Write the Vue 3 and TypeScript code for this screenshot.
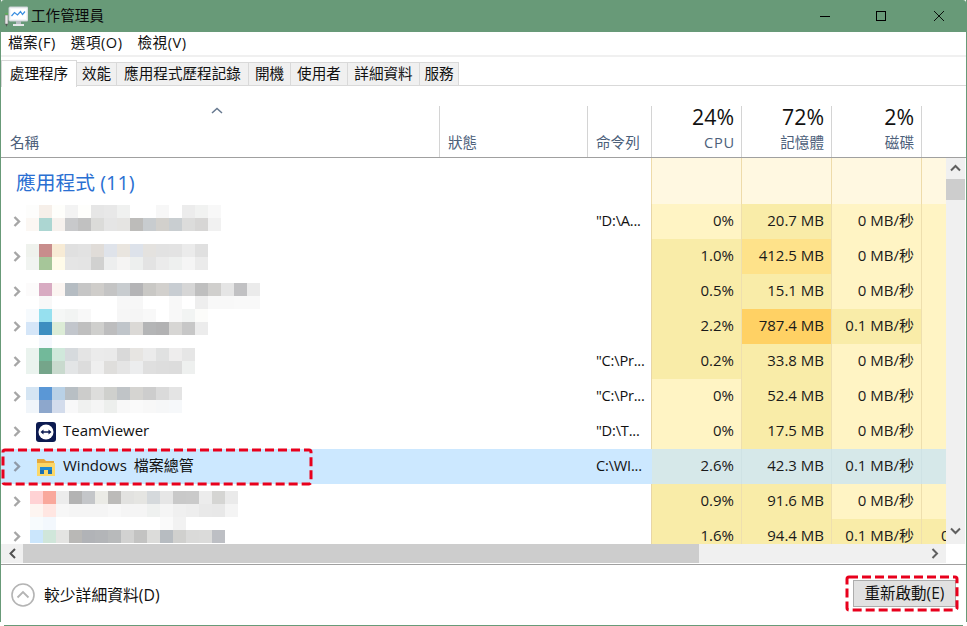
<script setup lang="ts">
type Blob = { top: number; left: number; cols: number; rows: string[][] }
type Row = {
  name?: string
  icon?: 'teamviewer' | 'folder'
  blob?: Blob
  cmd: string
  cpu: string
  mem: string
  disk: string
  extra?: string
  heat: [string, string, string, string]
  selected?: boolean
}

const menus = ['檔案(F)', '選項(O)', '檢視(V)']
const tabs = ['處理程序', '效能', '應用程式歷程記錄', '開機', '使用者', '詳細資料', '服務']

function parseBlob(top: number, left: number, lines: string[]): Blob {
  const rows = lines.map(l => l.split(' '))
  return { top, left, cols: rows[0].length, rows }
}

const rows: Row[] = [
  {
    blob: parseBlob(1, 0, [
      'fdfdfc f6efe9 fefefb f3f3f3 fefefc e6e6e6 e8e8e8 f0f1f0 ffffff ffffff f7f7f7 ffffff ececec f1f2f1 f8f8f8',
      'fbf7f3 acd6d2 f6f1ed c8c9cb c1c1c1 dbdbd9 e5e5e5 e5e4e2 bdbcba c8cccf d2d0cc c9ced1 dcdcdb d7d6d5 f1f1f1'
    ]),
    cmd: '"D:\\A...', cpu: '0%', mem: '20.7 MB', disk: '0 MB/秒',
    heat: ['h1', 'h2', 'h1', 'h1']
  },
  {
    blob: parseBlob(5, 0, [
      'eff2ed c88d8c f7ebd5 e0e0e0 e2e2e2 e0dcd8 dfe3ea e9e5df dde2ea e4e2df e2e2e2 e3e3e3 ebebeb e0e0e0',
      'f1f4f1 a6c699 fffbe9 e5e5e5 e4e4e4 d1d1d0 edeeee f5f4f3 edefee e3e3e3 ebebeb eef0ef f5f5f5 ebebeb'
    ]),
    cmd: '', cpu: '1.0%', mem: '412.5 MB', disk: '0 MB/秒',
    heat: ['h2', 'h3', 'h1', 'h1']
  },
  {
    blob: parseBlob(9, 0, [
      'fcfbfb d8abc2 fbf5f1 b5bcc2 c6c6c6 cfcdca c4c4c4 c8cccf b4b4b6 c9c8c5 d2d0cd c8cdd2 d6d6d6 bfbfbf d0cfcd e5e5e5 c1c1c3 ebebeb',
      'ffffff f8f8f8 ffffff ffffff ffffff ffffff ffffff f7f7f7 f7f7f7 ffffff ffffff f8f8f8 ffffff eeeeee f8f8f8 f8f8f8 f9f9f9 f9f9f9'
    ]),
    cmd: '', cpu: '0.5%', mem: '15.1 MB', disk: '0 MB/秒',
    heat: ['h2', 'h2', 'h1', 'h1']
  },
  {
    blob: parseBlob(0, 0, [
      'f6fafd 96e0ef f5f7f6 f2f4f3 f8f8f8 ffffff ffffff f6f6f6 f5f5f5 f8f8f8 ffffff f8f8f8 f2f4f3 fcfcfa',
      'd5e6f8 3d8ec0 dcecd6 c2c6cc bfbfbf cfcfcd bdbdbe c0c5ca dbd9d6 b4b5b6 b2b2b3 d7d6d4 c7c7c7 ececec',
      'ffffff f5f8fd ffffff ffffff ffffff ffffff ffffff ffffff ffffff ffffff ffffff ffffff ffffff ffffff'
    ]),
    cmd: '', cpu: '2.2%', mem: '787.4 MB', disk: '0.1 MB/秒',
    heat: ['h2', 'h4', 'h2', 'h1']
  },
  {
    blob: parseBlob(4, 0, [
      'eaf3ee 72b99a d0e8db d6dadd e4e4e4 ebebeb eaeaea d9d9d9 e7e5e2 ebebeb e0e1e1 eeeded e6e6e6',
      'eaf3ee 75a58a c9dace e3e5e6 dcdcdc efefef dfdedc e5e5e5 ecedee dfdfdf dddddd dcdcdc eef0ef'
    ]),
    cmd: '"C:\\Pr...', cpu: '0.2%', mem: '33.8 MB', disk: '0 MB/秒',
    heat: ['h2', 'h2', 'h1', 'h1']
  },
  {
    blob: parseBlob(8, 0, [
      'd5e5f3 5a97d6 b9d1e6 b8bfc4 cccccb dddddc cfd0cd c0c4c7 d5d4d1 cdcdcd dadada e4e4e4',
      'f0f5fa 8da7cc d3dcec f8f8f9 f0f1f0 f5f5f5 edefed f8f8f8 fafafa f8f8f8 f6f7f8 f6f8fa'
    ]),
    cmd: '"C:\\Pr...', cpu: '0%', mem: '52.4 MB', disk: '0 MB/秒',
    heat: ['h1', 'h2', 'h1', 'h1']
  },
  {
    name: 'TeamViewer', icon: 'teamviewer',
    cmd: '"D:\\T...', cpu: '0%', mem: '17.5 MB', disk: '0 MB/秒',
    heat: ['h1', 'h2', 'h1', 'h1']
  },
  {
    name: 'Windows 檔案總管', icon: 'folder', selected: true,
    cmd: 'C:\\WI...', cpu: '2.6%', mem: '42.3 MB', disk: '0.1 MB/秒',
    heat: ['sel', 'sel', 'sel', 'sel']
  },
  {
    blob: parseBlob(7, 4, [
      'ffd2d4 f9a89c ececec b3b3b3 c4c6c9 ebebe6 bcbbb9 e2e2e0 e5e5e2 d5d9dc e6e6e6 c9c9c9 cacaca ececec d5d5d3 eaeaea',
      'fdf5f1 ffe6e2 f7f7f7 f5f5f5 f5f5f5 f5f5f5 f8f8f8 f5f5f5 f5f5f5 eff1f0 f5f5f5 f0f0f0 eeeeee e9e9e9 e8e8e8 f4f4f4',
      'f7fbfd f3f8fd ffffff ffffff ffffff ffffff ffffff ffffff ffffff ffffff fafafa f2f2f2 ffffff ffffff ffffff ffffff'
    ]),
    cmd: '', cpu: '0.9%', mem: '91.6 MB', disk: '0 MB/秒',
    heat: ['h2', 'h2', 'h1', 'h1']
  },
  {
    blob: parseBlob(11, 4, [
      'cbe6fc d0e6da e4e4e2 b9b8b6 b1b3b7 b3b5b8 b8babb d2d2d1 c3c3c2 dcdcda b7bcc1 d0d0ce dadad9 dbdbda bdbfc4'
    ]),
    cmd: '', cpu: '1.6%', mem: '94.4 MB', disk: '0.1 MB/秒', extra: '0',
    heat: ['h2', 'h2', 'h2', 'h2']
  }
]
</script>

<template>
  <div class="window">
    <div class="frame">
      <header class="titlebar">
        <svg class="app-icon" width="24" height="22" viewBox="0 0 24 22">
          <rect x="1" y="8" width="3" height="2" fill="#5fae5a" />
          <rect x="1" y="10" width="3" height="9" fill="#e8e8e8" stroke="#777" stroke-width=".6" />
          <path d="M1.500 19h2l-1 3z" fill="#555" />
          <rect x="5" y="2" width="19" height="14" rx="1" fill="#f4f6f8" stroke="#c8ced2" />
          <rect x="7" y="4" width="15" height="10" fill="#fff" />
          <path d="M7.500 11l3-3.500 3 2.500 3-3.500 2 3 2.500-3" fill="none" stroke="#3b8fe0" stroke-width="1.200" />
          <rect x="12" y="16" width="5" height="3" fill="#b8bec2" />
          <rect x="9" y="19" width="11" height="2" fill="#e6e8ea" />
        </svg>
        <span class="title">工作管理員</span>
        <div class="controls">
          <svg width="10" height="10" viewBox="0 0 10 10"><path d="M0 5.500h10" stroke="#000" fill="none" /></svg>
          <svg width="10" height="10" viewBox="0 0 10 10"><rect x=".5" y=".5" width="9" height="9" stroke="#000" fill="none" /></svg>
          <svg class="close" width="10" height="10" viewBox="0 0 10 10"><path d="M0 0l10 10M10 0L0 10" stroke="#000" stroke-width=".9" fill="none" /></svg>
        </div>
      </header>

      <nav class="menu">
        <span v-for="m in menus" :key="m">{{ m }}</span>
      </nav>

      <div class="tabs">
        <span
          v-for="(t, i) in tabs"
          :key="t"
          class="tab"
          :class="{ active: i === 0 }"
        >{{ t }}</span>
        <span class="tab-rest"></span>
      </div>

      <section class="head grid">
        <div class="hcell name-head">
          <svg class="sort" width="12" height="7" viewBox="0 0 12 7"><path d="M1 6l5-4.500L11 6" fill="none" stroke="#66788f" stroke-width="1.500" /></svg>
          <span class="label">名稱</span>
        </div>
        <div class="hcell"><span class="label">狀態</span></div>
        <div class="hcell"><span class="label">命令列</span></div>
        <div class="hcell right"><span class="pct">24%</span><span class="label wide">CPU</span></div>
        <div class="hcell right"><span class="pct">72%</span><span class="label">記憶體</span></div>
        <div class="hcell right"><span class="pct">2%</span><span class="label">磁碟</span></div>
        <div class="hcell last"></div>
      </section>

      <div class="body">
        <div class="viewport">
          <div class="group grid">
            <div class="group-title">應用程式 (11)</div>
            <div class="gcell"></div>
            <div class="gcell"></div>
            <div class="gcell"></div>
            <div class="gcell end"></div>
          </div>

          <div
            v-for="(r, i) in rows"
            :key="i"
            class="row grid"
            :class="{ selected: r.selected }"
          >
            <div class="name">
              <svg class="chev" width="8" height="11" viewBox="0 0 8 11"><path d="M1.500 1l4.500 4.500L1.500 10" fill="none" :stroke="r.selected ? '#8f9aa8' : '#a6a6a6'" stroke-width="2.400" /></svg>
              <div
                v-if="r.blob"
                class="blob"
                :style="{
                  marginTop: r.blob.top + 'px',
                  marginLeft: r.blob.left + 'px',
                  gridTemplateColumns: `repeat(${r.blob.cols}, 13px)`
                }"
              >
                <template v-for="(line, y) in r.blob.rows" :key="y">
                  <i v-for="(c, x) in line" :key="x" :style="{ background: '#' + c }"></i>
                </template>
              </div>
              <template v-else>
                <svg v-if="r.icon === 'teamviewer'" class="icon" width="20" height="20" viewBox="0 0 20 20">
                  <rect width="20" height="20" rx="3" fill="#0c1a50" />
                  <circle cx="10" cy="10" r="7.500" fill="#fff" />
                  <path d="M4.500 10l3-2.500v1.700h5V7.500l3 2.500-3 2.500v-1.700h-5v1.700z" fill="#0c1a50" />
                </svg>
                <svg v-else class="icon" width="20" height="20" viewBox="0 0 20 20">
                  <path d="M1 2h7l2 2h8v3H1z" fill="#e6a83c" />
                  <path d="M1 6h18v13H1z" fill="#fbd768" />
                  <path d="M4 10h12v3H4z" fill="#1f8ad4" />
                  <path d="M4 13h4v4H4zM12 13h4v4h-4z" fill="#1b6fb0" />
                  <path d="M8 13h4v4H8z" fill="#fbd768" />
                </svg>
                <span class="text">{{ r.name }}</span>
              </template>
            </div>
            <div class="status"></div>
            <div class="cmd">{{ r.cmd }}</div>
            <div class="val" :class="r.heat[0]">{{ r.cpu }}</div>
            <div class="val" :class="r.heat[1]">{{ r.mem }}</div>
            <div class="val" :class="r.heat[2]">{{ r.disk }}</div>
            <div class="val extra" :class="r.heat[3]">{{ r.extra }}</div>
          </div>
        </div>

        <div class="vscroll">
          <svg width="19" height="21" viewBox="0 0 19 21"><path d="M5 12.500l4.500-4.500 4.500 4.500" fill="none" stroke="#606060" stroke-width="2" /></svg>
          <div class="vthumb"></div>
          <svg class="vdown" width="19" height="21" viewBox="0 0 19 21"><path d="M5 5.500l4.500 4.500 4.500-4.500" fill="none" stroke="#606060" stroke-width="2" /></svg>
        </div>
      </div>

      <div class="hscroll">
        <svg width="22" height="19" viewBox="0 0 22 19"><path d="M14 5l-4.500 4.500L14 14" fill="none" stroke="#505050" stroke-width="2" /></svg>
        <div class="hthumb"></div>
        <svg class="hright" width="22" height="19" viewBox="0 0 22 19"><path d="M8.500 5l4.500 4.500L8.500 14" fill="none" stroke="#606060" stroke-width="2" /></svg>
      </div>

      <footer class="footer">
        <svg width="24" height="24" viewBox="0 0 24 24">
          <circle cx="12" cy="12" r="11" fill="none" stroke="#b4b4b4" stroke-width="1.600" />
          <path d="M6.500 14.500L12 9l5.500 5.500" fill="none" stroke="#b4b4b4" stroke-width="1.800" />
        </svg>
        <span class="less">較少詳細資料(D)</span>
        <button class="restart" type="button">重新啟動(E)</button>
      </footer>
    </div>
    <div class="bottom-line"></div>

    <svg class="dash row-dash" width="312" height="38" viewBox="0 0 312 38">
      <rect x="2" y="2" width="308" height="34" rx="2" fill="none" stroke="#e8001c" stroke-width="3" stroke-dasharray="9 4" />
    </svg>
    <svg class="dash btn-dash" width="114" height="37" viewBox="0 0 114 37">
      <rect x="2" y="2" width="110" height="33" rx="2" fill="none" stroke="#e8001c" stroke-width="3" stroke-dasharray="9 4" />
    </svg>
  </div>
</template>

<style>
html,
body {
  margin: 0;
  background: #fff;
}
</style>

<style scoped>
.window {
  position: relative;
  width: 967px;
  height: 626px;
  overflow: hidden;
  background: #fff;
  color: #111;
  font-family: "Open Sans", "Noto Sans CJK TC", sans-serif;
  font-size: 14.6px;
}

.frame {
  height: 622px;
  border-left: 1px solid #689a78;
  border-right: 1px solid #689a78;
  box-sizing: border-box;
  display: flex;
  flex-direction: column;
}

.bottom-line {
  height: 1px;
  margin: 3px 4px 0;
  background: #689a78;
}

.titlebar {
  height: 32px;
  flex: none;
  background: #689a78;
  display: flex;
  align-items: center;
  padding-left: 3px;
  border-radius: 3px 3px 0 0;
}

.app-icon {
  margin-bottom: 1px;
}

.title {
  margin-left: 3px;
  margin-bottom: 4px;
  color: #0b0b0b;
}

.controls {
  margin-left: auto;
  display: flex;
  gap: 46px;
  margin-right: 22px;
}

.controls svg {
  display: block;
}

.controls .close {
  margin-left: 2px;
}

.menu {
  height: 25px;
  flex: none;
  box-sizing: border-box;
  display: flex;
  align-items: center;
  gap: 15px;
  padding: 0 0 4px 7px;
  border-bottom: 2px solid #f0f0f0;
  letter-spacing: .5px;
}

.tabs {
  height: 29px;
  flex: none;
  box-sizing: border-box;
  padding-top: 2px;
  display: grid;
  grid-template-columns: 76px 40px 132px 42px 57px 72px 39px 1fr;
  align-items: end;
}

.tab {
  height: 24px;
  box-sizing: border-box;
  display: flex;
  align-items: center;
  justify-content: center;
  padding-bottom: 3px;
  background: #f0f0f0;
  border: 1px solid #d9d9d9;
  border-left: 0;
}

.tab.active {
  height: 27px;
  background: #fff;
  border-left: 1px solid #d9d9d9;
  border-bottom: 0;
  margin-bottom: -1px;
  position: relative;
}

.tab-rest {
  height: 1px;
  background: #d9d9d9;
}

.grid {
  display: grid;
  grid-template-columns: 439px 148px 64px 90px 90px 90px 24px;
}

.head {
  flex: none;
  height: 72px;
  padding-top: 20px;
  box-sizing: border-box;
  border-bottom: 1px solid #a0a0a0;
}

.hcell {
  display: flex;
  flex-direction: column;
  justify-content: flex-end;
  box-sizing: border-box;
  border-right: 1px solid #d4d4d4;
  padding: 0 7px 5px 8px;
  color: #4c607a;
}

.hcell.last {
  border-right: 0;
}

.hcell.right {
  align-items: flex-end;
}

.name-head {
  padding-left: 9px;
  justify-content: space-between;
}

.sort {
  margin: 1px 0 0 201px;
  display: block;
}

.pct {
  font-size: 21.300px;
  line-height: 22px;
  color: #111;
  margin-bottom: 4px;
}

.label {
  line-height: 20px;
}

.label.wide {
  letter-spacing: .8px;
  margin-right: -1px;
}

.body {
  flex: none;
  height: 386px;
  display: flex;
}

.viewport {
  width: 945px;
  flex: none;
  overflow: hidden;
}

.group {
  height: 46px;
}

.group-title {
  grid-column: span 3;
  padding: 11px 0 0 15px;
  font-size: 19.800px;
  line-height: 28px;
  color: #2a6fd2;
  border-right: 1px solid #eedbaa;
}

.gcell {
  background: #fff8e1;
  border-right: 1px solid #eedbaa;
}

.gcell.end {
  border-right: 0;
}

.row {
  height: 35px;
  align-items: stretch;
}

.row.selected {
  background: #cce8ff;
}

.name {
  grid-column: span 1;
  height: 35px;
  display: flex;
  align-items: center;
  padding-left: 12px;
  box-sizing: border-box;
}

.chev {
  flex: none;
  margin-right: 5px;
}

.blob {
  align-self: flex-start;
  display: grid;
  grid-auto-rows: 13px;
  position: relative;
  z-index: 1;
}

.blob i {
  display: block;
  width: 13px;
  height: 13px;
}

.icon {
  margin-left: 10px;
  flex: none;
}

.text {
  margin: 0 0 4px 7px;
  color: #111;
  font-size: 15px;
  word-spacing: 3px;
}

.cmd {
  padding-left: 8px;
  line-height: 33px;
  white-space: nowrap;
  overflow: hidden;
  color: #111;
  border-right: 1px solid #e8d6a6;
  letter-spacing: -.2px;
}

.row.selected .cmd {
  border-right-color: #cce8ff;
}

.val {
  text-align: right;
  padding-right: 7px;
  line-height: 33px;
  box-sizing: border-box;
  border-right: 1px solid #eedfae;
  white-space: nowrap;
  color: #1a1a1a;
  font-size: 15px;
}

.extra {
  border-right: 0;
  text-align: left;
  padding: 0 0 0 19px;
  overflow: hidden;
}

.h1 {
  background: #fff4c4;
}

.h2 {
  background: #f9eca8;
}

.h3 {
  background: #fee28a;
}

.h4 {
  background: #ffd164;
}

.sel {
  background: #d6e8e9;
  border-right-color: #cfe2e4;
}

.vscroll {
  width: 19px;
  flex: none;
  margin-right: 1px;
  background: #f0f0f0;
  display: flex;
  flex-direction: column;
}

.vscroll svg {
  flex: none;
  display: block;
}

.vthumb {
  height: 21px;
  background: #cdcdcd;
}

.vdown {
  margin-top: auto;
}

.hscroll {
  flex: none;
  width: 945px;
  height: 19px;
  background: #f0f0f0;
  display: flex;
}

.hscroll svg {
  flex: none;
  display: block;
}

.hthumb {
  width: 676px;
  background: #cdcdcd;
}

.hright {
  margin-left: auto;
}

.footer {
  flex: 1;
  margin-top: 1px;
  border-top: 1px solid #a0a0a0;
  display: flex;
  align-items: center;
  padding: 2px 10px 0;
}

.less {
  margin: 0 0 1px 9px;
  font-size: 15.800px;
}

.restart {
  margin: 0 0 2px auto;
  width: 103px;
  height: 27px;
  padding: 0 0 4px;
  background: #e1e1e1;
  border: 1px solid #adadad;
  font: inherit;
  font-size: 15.500px;
  color: #111;
}

.dash {
  position: absolute;
  display: block;
}

.row-dash {
  left: 1px;
  top: 448px;
}

.btn-dash {
  left: 845px;
  top: 575px;
}
</style>
